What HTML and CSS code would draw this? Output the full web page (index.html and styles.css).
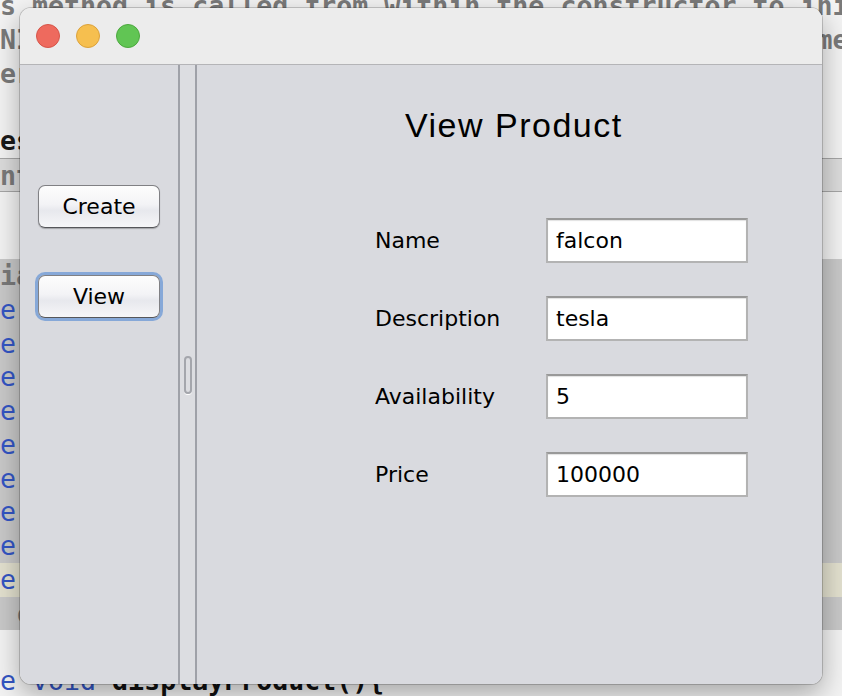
FILE: index.html
```html
<!DOCTYPE html>
<html>
<head>
<meta charset="utf-8">
<title>View Product</title>
<link rel="stylesheet" href="styles.css">
</head>
<body>
<div class="desk">
  <div class="code">
    <div class="ln cm">s method is called from within the constructor to initialize the form.</div>
    <div class="ln cm">NI                                                 me</div>
    <div class="ln cm">er</div>
    <div class="ln"> </div>
    <div class="ln an">es</div>
    <div class="ln fold"><span class="cm">nt</span></div>
    <div class="ln"> </div>
    <div class="ln"> </div>
    <div class="ln sel cm">ia</div>
    <div class="ln sel"><span class="kw">e</span></div>
    <div class="ln sel"><span class="kw">e</span></div>
    <div class="ln sel"><span class="kw">e</span></div>
    <div class="ln sel"><span class="kw">e</span></div>
    <div class="ln sel"><span class="kw">e</span></div>
    <div class="ln sel"><span class="kw">e</span></div>
    <div class="ln sel"><span class="kw">e</span></div>
    <div class="ln sel"><span class="kw">e</span></div>
    <div class="ln cur"><span class="kw">e</span></div>
    <div class="ln sel cm"> c</div>
    <div class="ln"> </div>
    <div class="ln"><span class="kw">e void</span> <b>displayProduct(){</b></div>
  </div>

  <div class="window">
    <div class="titlebar">
      <span class="light red"></span>
      <span class="light yellow"></span>
      <span class="light green"></span>
    </div>
    <div class="content">
      <div class="left">
        <button class="btn">Create</button>
        <button class="btn focus">View</button>
      </div>
      <div class="divider"><span class="grip"></span></div>
      <div class="right">
        <h1 class="title">View Product</h1>
        <div class="form">
          <label class="lbl">Name</label>
          <div class="field">falcon</div>
          <label class="lbl">Description</label>
          <div class="field">tesla</div>
          <label class="lbl">Availability</label>
          <div class="field">5</div>
          <label class="lbl">Price</label>
          <div class="field">100000</div>
        </div>
      </div>
    </div>
  </div>
</div>
</body>
</html>
```
FILE: styles.css
```css
html, body {
  margin: 0;
  padding: 0;
}
body {
  width: 842px;
  height: 696px;
  overflow: hidden;
  background: #f3f3f3;
}
.desk {
  position: relative;
  width: 842px;
  height: 696px;
  overflow: hidden;
}
.code {
  margin-top: -11px;
  font-family: "DejaVu Sans Mono", "Liberation Mono", monospace;
  font-size: 26.6px;
  font-weight: bold;
  color: #111;
}
.ln {
  height: 33.75px;
  line-height: 33.75px;
  white-space: pre;
  box-sizing: border-box;
}
.cm { color: #7a7a7a; }
.an { color: #1a1a1a; }
.kw { color: #3355c4; font-weight: normal; }
.ln b { color: #111; }
.fold {
  background: #dcdcdc;
  border-top: 1px solid #a6a6a6;
  border-bottom: 1px solid #a6a6a6;
}
.sel { background: #c9c9c9; }
.cur { background: #e3e1cf; }

.window {
  position: absolute;
  left: 20px;
  top: 8px;
  width: 802px;
  height: 676px;
  border-radius: 11px;
  overflow: hidden;
  display: flex;
  flex-direction: column;
  box-shadow: 0 0 0 1px rgba(0,0,0,0.18), 0 10px 28px rgba(0,0,0,0.32);
  font-family: "DejaVu Sans", "Liberation Sans", sans-serif;
}
.titlebar {
  flex: none;
  height: 56px;
  background: #ececec;
  border-bottom: 1px solid #b4b4b7;
  display: flex;
  align-items: center;
  gap: 16px;
  padding-left: 16px;
}
.light {
  width: 24px;
  height: 24px;
  border-radius: 50%;
  box-sizing: border-box;
}
.red { background: #ee6a5e; border: 1px solid #d65549; }
.yellow { background: #f6bf4f; border: 1px solid #dca23b; }
.green { background: #61c554; border: 1px solid #4ca83e; }

.content {
  flex: 1;
  display: flex;
  background: #d9dadf;
}
.left {
  width: 158px;
  flex: none;
  border-right: 2px solid #9fa1a8;
  padding-top: 120px;
  display: flex;
  flex-direction: column;
  align-items: center;
  gap: 47px;
}
.btn {
  width: 122px;
  height: 43px;
  box-sizing: border-box;
  border: 1px solid #808084;
  border-bottom-color: #55565a;
  border-radius: 7px;
  background: linear-gradient(#fdfdfd, #f3f3f6 45%, #e7e8ed 60%, #f6f6f8);
  box-shadow: 0 1px 1px rgba(0,0,0,0.25);
  font-family: "DejaVu Sans", sans-serif;
  font-size: 22px;
  color: #000;
  padding: 0;
}
.btn.focus {
  box-shadow: 0 0 0 3px #86a8d8;
}
.divider {
  width: 15px;
  flex: none;
  background: #dcdde1;
  display: flex;
  align-items: center;
  justify-content: center;
}
.grip {
  width: 8px;
  height: 38px;
  box-sizing: border-box;
  border: 2px solid #a4a6ac;
  border-radius: 4px;
  box-shadow: 0 1px 0 #ffffff;
}
.right {
  flex: 1;
  border-left: 2px solid #9fa1a8;
}
.title {
  margin: 0;
  padding: 40px 0 0 208px;
  font-family: "Liberation Sans", Arial, sans-serif;
  font-weight: normal;
  font-size: 34px;
  line-height: 40px;
  letter-spacing: 1.5px;
  color: #000;
}
.form {
  margin: 73px 0 0 178px;
  display: grid;
  grid-template-columns: 171px 202px;
  grid-auto-rows: 45px;
  row-gap: 33px;
  align-items: center;
}
.lbl {
  font-size: 22px;
  color: #000;
}
.field {
  height: 45px;
  box-sizing: border-box;
  background: #fff;
  border: 2px solid #b3b3b3;
  border-top-color: #999999;
  box-shadow: inset 0 1px 1px rgba(0,0,0,0.12);
  padding: 0 8px;
  display: flex;
  align-items: center;
  font-size: 22px;
  color: #000;
}
```
